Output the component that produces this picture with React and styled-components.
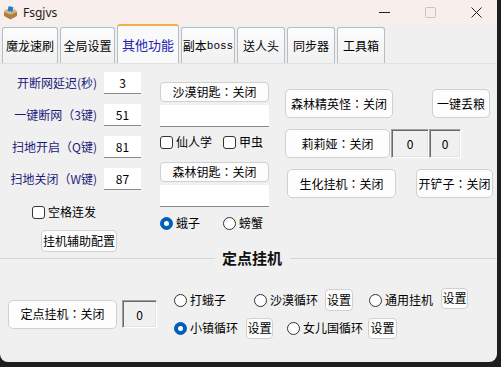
import React from 'react';
import styled, { createGlobalStyle, css } from 'styled-components';

const Global = createGlobalStyle`
  html, body { margin: 0; padding: 0; background: #1e1e1e; }
  body {
    width: 501px; height: 367px; overflow: hidden;
    font-family: "Noto Sans CJK SC", "Noto Sans", sans-serif;
    font-size: 12px; color: #000;
  }
  * { box-sizing: border-box; }
`;

const Window = styled.div`
  width: 497px; height: 362px; background: #f0f0f0;
  border-radius: 0 0 8px 8px; overflow: hidden;
  display: flex; flex-direction: column;
`;

const TitleBar = styled.div`
  height: 24px; flex: 0 0 24px; background: #f8eeeb;
  display: flex; align-items: center; padding-left: 3px; overflow: hidden;
`;

const TitleText = styled.span`
  font-family: "Noto Sans", "Open Sans", sans-serif; font-size: 12px;
  margin-left: 5px; color: #1a1a1a; flex: 1;
`;

const Controls = styled.div`
  display: flex; height: 24px; margin-right: -2px;
`;

const CtrlBtn = styled.div`
  width: 46px; height: 24px; display: flex; align-items: center; justify-content: center;
`;

const TabStrip = styled.div`
  height: 39px; flex: 0 0 39px; display: flex; align-items: flex-end;
  padding-left: 2px; gap: 2px;
`;

const Tab = styled.div`
  width: ${p => p.$w}px; height: 36px;
  border: 1px solid #b4bcc4; border-bottom: none; border-radius: 3px 3px 0 0;
  background: linear-gradient(#fdfdfd, #f0f0f0);
  display: flex; align-items: center; justify-content: center;
  font-size: 12px; color: #000; white-space: nowrap;
  ${p => p.$active && css`
    height: 39px; background: #f9f9f9; color: #1f22b4;
    border-top: 2px solid #f4b04a; font-size: 13px;
  `}
`;

const Mono = styled.span`
  font-family: "Liberation Mono", monospace; font-size: 11px;
`;

const Colon = styled.span`
  font-family: "Noto Sans CJK TC", "Noto Sans CJK SC", sans-serif;
`;

const Panel = styled.div`
  flex: 1; display: flex; flex-direction: column;
  border-top: 1px solid #e2e2e2;
`;

const Upper = styled.div`
  height: 185px; display: flex; padding-top: 8px;
`;

const LeftCol = styled.div`
  width: 141px; display: flex; flex-direction: column;
`;

const FieldRow = styled.div`
  display: flex; align-items: center; height: 22px;
  & + & { margin-top: 10px; }
`;

const Label = styled.span`
  width: 97px; text-align: right; color: #1c1c7a; white-space: nowrap;
  line-height: 22px; font-size: 12px;
`;

const NumBox = styled.div`
  width: 37px; height: 22px; margin-left: 7px; background: #fff;
  border-bottom: 1px solid #8a8a8a; text-align: center; line-height: 21px;
`;

const Field = styled.div`
  width: ${p => p.$w}px; height: 22px; background: #fff;
  border-bottom: 1px solid #8a8a8a; margin-top: ${p => p.$mt || 0}px;
`;

const CheckRow = styled.div`
  display: flex; align-items: center; height: 16px;
  margin-top: ${p => p.$mt || 0}px; padding-left: ${p => p.$pl || 0}px;
`;

const Item = styled.label`
  display: flex; align-items: center; gap: 3px;
  width: ${p => (p.$w ? `${p.$w}px` : 'auto')}; flex: 0 0 auto;
  margin-left: ${p => p.$ml || 0}px;
  white-space: nowrap; line-height: 16px;
`;

const CheckBox = styled.span`
  width: 13px; height: 13px; border: 1px solid #333; border-radius: 3px; background: #fff;
  flex: 0 0 13px;
`;

const Radio = styled.span`
  width: 13px; height: 13px; border: 1px solid #333; border-radius: 50%; background: #fff;
  flex: 0 0 13px; position: relative;
  ${p => p.$on && css`
    background: #005fb8; border-color: #005fb8;
    &::after {
      content: ''; position: absolute; left: 3px; top: 3px; width: 5px; height: 5px;
      border-radius: 50%; background: #fff;
    }
  `}
`;

const Btn = styled.div`
  width: ${p => p.$w}px; height: ${p => p.$h}px; flex: 0 0 auto;
  margin-left: ${p => p.$ml || 0}px; margin-top: ${p => p.$mt || 0}px;
  background: #fdfdfd; border: 1px solid #d0d0d0; border-radius: ${p => p.$r || 4}px;
  display: flex; align-items: center; justify-content: center;
  white-space: nowrap; font-size: 12px; line-height: 16px;
`;

const Sunken = styled.div`
  width: ${p => p.$w}px; height: ${p => p.$h}px; flex: 0 0 auto;
  margin-left: ${p => p.$ml || 0}px;
  background: #f0f0f0; border: 1px solid; border-color: #a0a0a0 #fff #fff #a0a0a0;
  box-shadow: inset 1px 1px #696969, inset -1px -1px #e3e3e3;
  display: flex; align-items: center; justify-content: center;
`;

const MidCol = styled.div`
  width: 109px; margin-left: 19px; display: flex; flex-direction: column;
`;

const RightCol = styled.div`
  margin-left: 16px; padding-top: 17px; display: flex; flex-direction: column; gap: 11px;
`;

const BtnRow = styled.div`
  display: flex; align-items: center;
`;

const Divider = styled.div`
  height: 18px; display: flex; align-items: center;
`;

const Line = styled.div`
  height: 1px; background: #d6d6d6;
  ${p => (p.$w ? css`width: ${p.$w}px;` : css`flex: 1;`)}
`;

const SectionTitle = styled.span`
  font-size: 15px; font-weight: bold; margin: 0 8px 0 7px; line-height: 18px; color: #111;
`;

const Bottom = styled.div`
  display: flex; align-items: center; padding: 22px 0 0 8px;
`;

const RadioGroup = styled.div`
  margin-left: 17px; display: flex; flex-direction: column; gap: 6px;
`;

const RadioRow = styled.div`
  display: flex; align-items: center; height: 22px;
`;

const AppIcon = () => (
  <svg width="15" height="15" viewBox="0 0 15 15">
    <path d="M1 6.5 L7.5 9.5 L14 6.5 L14 11 L7.5 14.5 L1 11 Z" fill="#b07d45" />
    <path d="M1 6.5 L3.5 4 L7.5 7 L11.5 4 L14 6.5 L7.5 9.5 Z" fill="#dcae74" />
    <rect x="5" y="1.5" width="5" height="5" rx="0.8" fill="#1c7fd3" transform="rotate(12 7.5 4)" />
  </svg>
);

const Toggle = ({ name }) => (
  <>{name}<Colon>：</Colon>关闭</>
);

export default function App() {
  return (
    <>
      <Global />
      <Window>
        <TitleBar>
          <AppIcon />
          <TitleText>Fsgjvs</TitleText>
          <Controls>
            <CtrlBtn>
              <svg width="11" height="11"><line x1="0" y1="5.5" x2="11" y2="5.5" stroke="#222" strokeWidth="1" /></svg>
            </CtrlBtn>
            <CtrlBtn>
              <svg width="11" height="11"><rect x="0.5" y="0.5" width="10" height="10" rx="1" fill="none" stroke="#c4c4c4" /></svg>
            </CtrlBtn>
            <CtrlBtn>
              <svg width="11" height="11"><path d="M0.5 0.5 L10.5 10.5 M10.5 0.5 L0.5 10.5" stroke="#222" strokeWidth="1" /></svg>
            </CtrlBtn>
          </Controls>
        </TitleBar>

        <TabStrip>
          <Tab $w={56}>魔龙速刷</Tab>
          <Tab $w={55}>全局设置</Tab>
          <Tab $w={62} $active>其他功能</Tab>
          <Tab $w={54}>副本<Mono>boss</Mono></Tab>
          <Tab $w={48}>送人头</Tab>
          <Tab $w={48}>同步器</Tab>
          <Tab $w={48}>工具箱</Tab>
        </TabStrip>

        <Panel>
          <Upper>
            <LeftCol>
              <FieldRow><Label>开断网延迟(秒)</Label><NumBox>3</NumBox></FieldRow>
              <FieldRow><Label>一键断网（3键)</Label><NumBox>51</NumBox></FieldRow>
              <FieldRow><Label>扫地开启（Q键)</Label><NumBox>81</NumBox></FieldRow>
              <FieldRow><Label>扫地关闭（W键)</Label><NumBox>87</NumBox></FieldRow>
              <CheckRow $mt={14} $pl={32}>
                <Item><CheckBox />空格连发</Item>
              </CheckRow>
              <Btn $w={76} $h={22} $ml={41} $mt={10}>挂机辅助配置</Btn>
            </LeftCol>

            <MidCol>
              <Btn $w={109} $h={20} $mt={10}><Toggle name="沙漠钥匙" /></Btn>
              <Field $w={109} $mt={3} />
              <CheckRow $mt={7}>
                <Item $w={63}><CheckBox />仙人学</Item>
                <Item><CheckBox />甲虫</Item>
              </CheckRow>
              <Btn $w={109} $h={20} $mt={12}><Toggle name="森林钥匙" /></Btn>
              <Field $w={109} $mt={3} />
              <CheckRow $mt={8}>
                <Item $w={63}><Radio $on />蛾子</Item>
                <Item><Radio />螃蟹</Item>
              </CheckRow>
            </MidCol>

            <RightCol>
              <BtnRow>
                <Btn $w={108} $h={29} $r={5}><Toggle name="森林精英怪" /></Btn>
                <Btn $w={58} $h={29} $r={5} $ml={39}>一键丢粮</Btn>
              </BtnRow>
              <BtnRow>
                <Btn $w={105} $h={29} $r={5}><Toggle name="莉莉娅" /></Btn>
                <Sunken $w={38} $h={29} $ml={1}>0</Sunken>
                <Sunken $w={32} $h={29}>0</Sunken>
              </BtnRow>
              <BtnRow>
                <Btn $w={109} $h={29} $r={5} $ml={2}><Toggle name="生化挂机" /></Btn>
                <Btn $w={77} $h={29} $r={5} $ml={20}><Toggle name="开铲子" /></Btn>
              </BtnRow>
            </RightCol>
          </Upper>

          <Divider>
            <Line $w={215} />
            <SectionTitle>定点挂机</SectionTitle>
            <Line />
          </Divider>

          <Bottom>
            <Btn $w={109} $h={29} $r={5}><Toggle name="定点挂机" /></Btn>
            <Sunken $w={35} $h={28} $ml={5}>0</Sunken>
            <RadioGroup>
              <RadioRow>
                <Item $w={80}><Radio />打蛾子</Item>
                <Item $w={71}><Radio />沙漠循环</Item>
                <Btn $w={28} $h={22}>设置</Btn>
                <Item $w={72} $ml={16}><Radio />通用挂机</Item>
                <Btn $w={27} $h={21} $mt={-4}>设置</Btn>
              </RadioRow>
              <RadioRow>
                <Item $w={72}><Radio $on />小镇循环</Item>
                <Btn $w={27} $h={21}>设置</Btn>
                <Item $w={81} $ml={14}><Radio />女儿国循环</Item>
                <Btn $w={29} $h={21}>设置</Btn>
              </RadioRow>
            </RadioGroup>
          </Bottom>
        </Panel>
      </Window>
    </>
  );
}
